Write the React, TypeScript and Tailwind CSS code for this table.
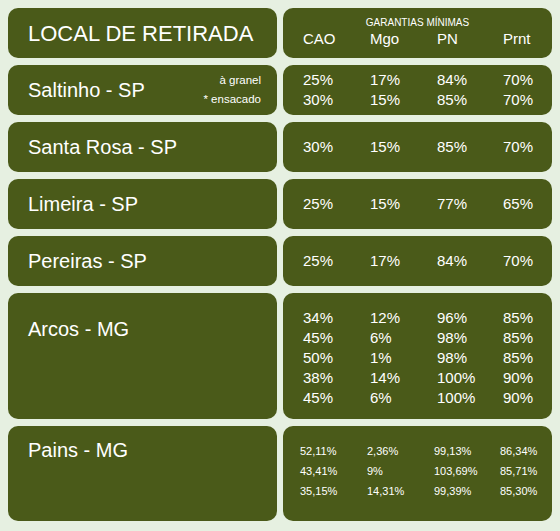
const ROWS = [
  {
    local: 'Saltinho - SP',
    note: ['à granel', '* ensacado'],
    values: [
      ['25%', '17%', '84%', '70%'],
      ['30%', '15%', '85%', '70%'],
    ],
  },
  { local: 'Santa Rosa - SP', values: [['30%', '15%', '85%', '70%']] },
  { local: 'Limeira - SP', values: [['25%', '15%', '77%', '65%']] },
  { local: 'Pereiras - SP', values: [['25%', '17%', '84%', '70%']] },
]

const ARCOS = [
  ['34%', '12%', '96%', '85%'],
  ['45%', '6%', '98%', '85%'],
  ['50%', '1%', '98%', '85%'],
  ['38%', '14%', '100%', '90%'],
  ['45%', '6%', '100%', '90%'],
]

const PAINS = [
  ['52,11%', '2,36%', '99,13%', '86,34%'],
  ['43,41%', '9%', '103,69%', '85,71%'],
  ['35,15%', '14,31%', '99,39%', '85,30%'],
]

function Values({ rows }: { rows: string[][] }) {
  return (
    <div className="grid grid-cols-[67px_67px_66px_1fr] text-[15px] leading-[20px]">
      {rows.flatMap((r, i) => r.map((v, j) => <span key={`${i}-${j}`}>{v}</span>))}
    </div>
  )
}

export default function App() {
  return (
    <div className="w-[560px] h-[531px] bg-[#e6f0e1] px-[8px] pt-[8px] flex flex-col gap-[7px] text-white font-['Liberation_Sans',Arial,sans-serif]">
      {/* cabeçalho */}
      <div className="grid grid-cols-2 gap-[6px] h-[50px]">
        <div className="bg-[#4a5a19] rounded-[10px] flex items-center pl-[20px] text-[22px]">LOCAL DE RETIRADA</div>
        <div className="bg-[#4a5a19] rounded-[10px] pt-[9px]">
          <p className="text-[10px] leading-[12px] text-center">GARANTIAS MÍNIMAS</p>
          <div className="grid grid-cols-[67px_67px_66px_1fr] pl-[20px] text-[15px] leading-[20px]">
            <span>CAO</span>
            <span>Mgo</span>
            <span>PN</span>
            <span>Prnt</span>
          </div>
        </div>
      </div>

      {ROWS.map((row) => (
        <div key={row.local} className="grid grid-cols-2 gap-[6px] h-[50px]">
          <div className="bg-[#4a5a19] rounded-[10px] flex items-center justify-between pl-[20px] pr-[16px]">
            <span className="text-[20px]">{row.local}</span>
            {row.note && (
              <div className="text-right text-[11.5px] leading-[19px]">
                {row.note.map((n) => (
                  <p key={n}>{n}</p>
                ))}
              </div>
            )}
          </div>
          <div className="bg-[#4a5a19] rounded-[10px] flex items-center pl-[20px]">
            <div className="w-full">
              <Values rows={row.values} />
            </div>
          </div>
        </div>
      ))}

      {/* Arcos */}
      <div className="grid grid-cols-2 gap-[6px] h-[126px]">
        <div className="bg-[#4a5a19] rounded-[10px] pl-[20px] pt-[25px] text-[20px] leading-[23px]">Arcos - MG</div>
        <div className="bg-[#4a5a19] rounded-[10px] pl-[20px] pt-[15px]">
          <Values rows={ARCOS} />
        </div>
      </div>

      {/* Pains */}
      <div className="grid grid-cols-2 gap-[6px] h-[95px]">
        <div className="bg-[#4a5a19] rounded-[10px] pl-[20px] pt-[13px] text-[20px] leading-[23px]">Pains - MG</div>
        <div className="bg-[#4a5a19] rounded-[10px] pl-[17px] pt-[15px]">
          <div className="grid grid-cols-[67px_67px_66px_1fr] text-[11px] leading-[20px]">
            {PAINS.flatMap((r, i) => r.map((v, j) => <span key={`${i}-${j}`}>{v}</span>))}
          </div>
        </div>
      </div>
    </div>
  )
}
